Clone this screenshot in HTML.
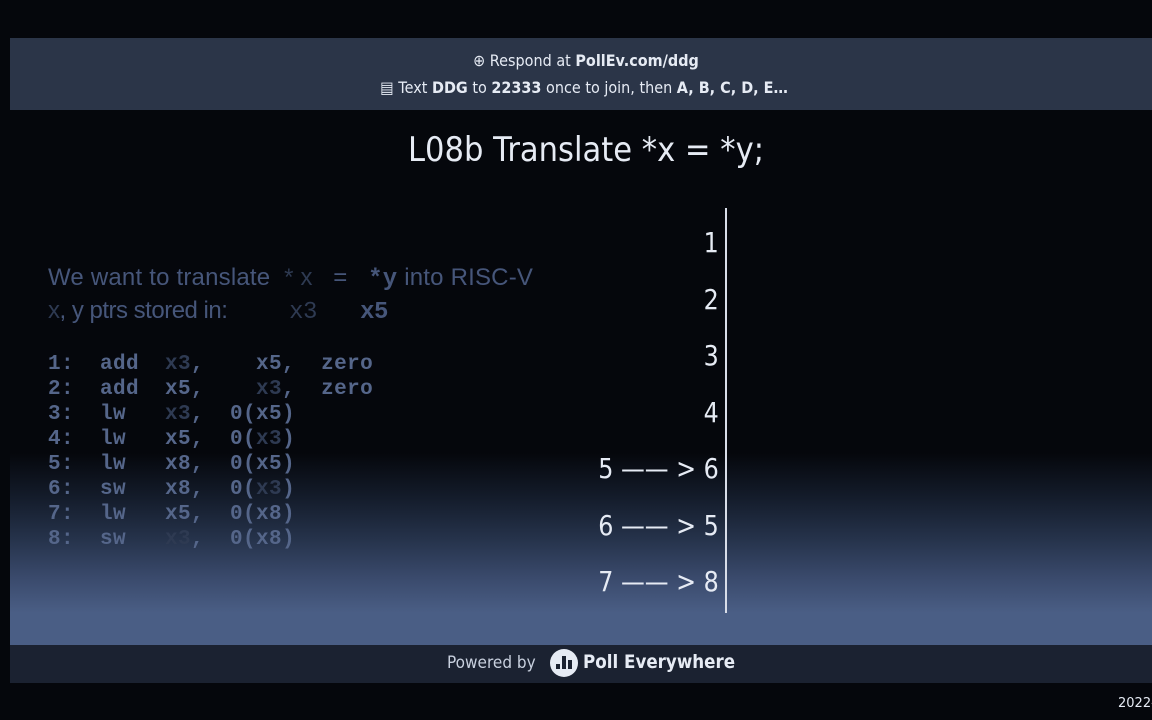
<!DOCTYPE html>
<html><head><meta charset="utf-8"><style>
*{margin:0;padding:0;box-sizing:border-box}
body{width:1152px;height:720px;background:#05070c;position:relative;overflow:hidden;font-family:"DejaVu Sans","Liberation Sans",sans-serif;}
.panel{position:absolute;left:10px;top:38px;width:1142px;height:645px;background:linear-gradient(to bottom,#05070c 0px,#05070c 415px,#141c2b 460px,#25324a 500px,#3a4a6c 540px,#4a5e85 575px,#4a5e85 607px,#1b2231 607px,#1b2231 645px);}
.head{position:absolute;left:10px;top:38px;width:1142px;height:72px;background:#2b3548;}
.t{position:absolute;color:#e6ebf4;white-space:pre;}
.c{left:0;width:1152px;text-align:center}
.code{position:absolute;left:48px;font-family:"Liberation Mono",monospace;font-weight:bold;font-size:21px;letter-spacing:.4px;color:#55668a;line-height:25px;white-space:pre}
.dim{color:#2e3a52}
.n{position:absolute;right:433px;color:#e6ebf4;font-size:28px;transform:scaleX(.85);transform-origin:right;white-space:pre}
</style></head><body>
<div class="panel"></div>
<div class="head"></div>
<div class="t c" style="top:51px;font-size:16px;transform:scaleX(.9);left:10px">⊕ Respond at <b>PollEv.com/ddg</b></div>
<div class="t c" style="top:78px;font-size:16px;transform:scaleX(.9);left:8px">▤ Text <b>DDG</b> to <b>22333</b> once to join, then <b>A, B, C, D, E…</b></div>
<div class="t c" style="top:130px;font-size:34px;transform:scaleX(.9);left:10px">L08b Translate *x = *y;</div>
<div style="position:absolute;left:725px;top:208px;width:2px;height:405px;background:#d8dde8"></div>
<div class="t" style="left:48px;top:264px;font-size:24px;color:#46567a;letter-spacing:.2px;font-family:'Liberation Sans',sans-serif">We want to translate  <span class="dim">* x</span>   =   <b style="font-family:'Liberation Mono'">*y</b> into RISC-V</div>
<div class="t" style="left:48px;top:297px;font-size:24px;color:#46567a;letter-spacing:-.5px;font-family:'Liberation Sans',sans-serif"><span class="dim">x</span>, y ptrs stored in:          <span class="dim" style="font-family:'Liberation Mono'">x3</span>       <b style="font-family:'Liberation Mono'">x5</b></div>
<div class="code" style="top:352px">1:  add  <span class="dim">x3</span>,    x5,  zero
2:  add  x5,    <span class="dim">x3</span>,  zero
3:  lw   <span class="dim">x3</span>,  0(x5)
4:  lw   x5,  0(<span class="dim">x3</span>)
5:  lw   x8,  0(x5)
6:  sw   x8,  0(<span class="dim">x3</span>)
7:  lw   x5,  0(x8)
8:  sw   <span class="dim">x3</span>,  0(x8)</div>
<div class="n" style="top:226px">1</div>
<div class="n" style="top:283px">2</div>
<div class="n" style="top:339px">3</div>
<div class="n" style="top:396px">4</div>
<div class="n" style="top:452px">5 —— &gt; 6</div>
<div class="n" style="top:509px">6 —— &gt; 5</div>
<div class="n" style="top:565px">7 —— &gt; 8</div>
<div class="t" style="left:447px;top:653px;font-size:17px;color:#c8d0de;transform:scaleX(.9);transform-origin:left">Powered by</div>
<div style="position:absolute;left:550px;top:649px;width:28px;height:28px;border-radius:50%;background:#e6ebf4"></div>
<div style="position:absolute;left:556px;top:664px;width:4px;height:5px;background:#1b2231"></div>
<div style="position:absolute;left:562px;top:656px;width:4px;height:13px;background:#1b2231"></div>
<div style="position:absolute;left:568px;top:660px;width:4px;height:9px;background:#1b2231"></div>
<div class="t" style="left:583px;top:651px;font-size:19px;font-weight:bold;transform:scaleX(.88);transform-origin:left">Poll Everywhere</div>
<div class="t" style="left:1118px;top:696px;font-size:13px;color:#e6ebf4">2022-</div>
</body></html>
